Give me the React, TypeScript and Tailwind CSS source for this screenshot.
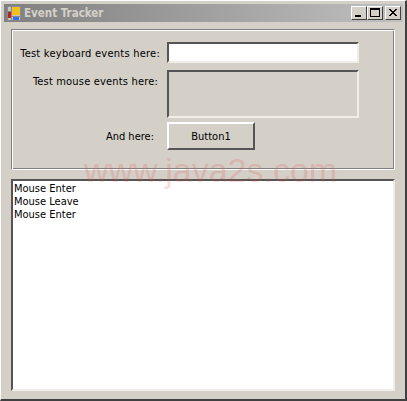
export default function App() {
  const etched = "border border-t-[#808080] border-l-[#808080] border-r-white border-b-white shadow-[inset_1px_1px_0_#fff,inset_-1px_-1px_0_#808080]";
  const sunken = "border-2 border-t-[#555] border-l-[#555] border-r-[#f0eee9] border-b-[#f0eee9]";
  const capBtn = "w-4 h-[14px] bg-[#d4d0c8] border border-t-white border-l-white border-r-[#404040] border-b-[#404040] flex items-center justify-center";
  return (
    <div className="relative w-[407px] h-[401px] overflow-hidden bg-[#d4d0c8] border-r-2 border-b-2 border-l border-t border-r-[#404040] border-b-[#404040] border-l-white border-t-white font-['DejaVu_Sans',sans-serif] font-stretch-condensed text-[11px] leading-[13px] text-[#000]">
      <div className="pl-[3px] pr-[2px] pt-[3px]">
        <div className="h-[18px] flex items-center bg-gradient-to-r from-[#808080] to-[#c0c0c0] pl-[3px] pr-[2px]">
          <svg width="14" height="15" viewBox="0 0 14 15" className="shrink-0">
            <rect x="0.5" y="0.5" width="13" height="14" fill="#c8c4bc" stroke="#8a8a8a" />
            <path d="M4.5 0v15M0 5.5h4M4 10.5h10" stroke="#8a8a8a" fill="none" />
            <rect x="5" y="1" width="8" height="8" fill="#f0c020" />
            <rect x="1" y="6" width="3" height="6" fill="#c02020" />
            <rect x="6" y="11" width="6" height="3" fill="#3070e8" />
          </svg>
          <span className="ml-[3px] font-bold text-[11.5px] text-[#d4d0c8]">Event Tracker</span>
          <div className="ml-auto flex items-center">
            <div className={capBtn}>
              <svg width="14" height="12" viewBox="0 0 14 12"><rect x="3" y="8" width="6" height="2" fill="#000" /></svg>
            </div>
            <div className={`${capBtn} mr-[2px]`}>
              <svg width="14" height="12" viewBox="0 0 14 12"><rect x="2.5" y="1.5" width="9" height="8" fill="none" stroke="#000" /><rect x="2" y="1" width="10" height="2" fill="#000" /></svg>
            </div>
            <div className={capBtn}>
              <svg width="14" height="12" viewBox="0 0 14 12"><path d="M3 2l7 7M4 2l7 7M10 2L3 9M11 2L4 9" stroke="#000" fill="none" /></svg>
            </div>
          </div>
        </div>
      </div>
      <div className="mx-[10px] mt-[7px] w-[384px] h-[141px]">
        <div className={`${etched} h-full pt-[12px] pl-[7px] flex flex-col`}>
          <div className="flex">
            <div className="w-[141px] text-right pt-[5px] whitespace-nowrap tracking-[0.24px]">Test keyboard events here:</div>
            <div className={`${sunken} ml-[7px] w-[192px] h-[21px] bg-white`} />
          </div>
          <div className="flex mt-[7px]">
            <div className="w-[139px] text-right pt-[5px] whitespace-nowrap tracking-[0.18px]">Test mouse events here:</div>
            <div className={`${sunken} ml-[9px] w-[192px] h-[48px]`} />
          </div>
          <div className="flex items-center mt-[4px]">
            <div className="w-[135px] text-right whitespace-nowrap">And here:</div>
            <div className="ml-[13px] w-[88px] h-[28px] flex items-center justify-center border-2 border-t-white border-l-white border-r-[#555] border-b-[#555]">Button1</div>
          </div>
        </div>
      </div>
      <div className={`${sunken} mx-[10px] mt-[9px] w-[384px] h-[212px] bg-white pl-[1px] pt-[1px]`}>
        <div>Mouse Enter</div>
        <div>Mouse Leave</div>
        <div>Mouse Enter</div>
      </div>
      <div className="absolute left-[83px] top-[149px] font-['Liberation_Sans',sans-serif] font-stretch-normal text-[34px] leading-[40px] text-[#e05050] opacity-20 whitespace-nowrap">www.java2s.com</div>
    </div>
  );
}
